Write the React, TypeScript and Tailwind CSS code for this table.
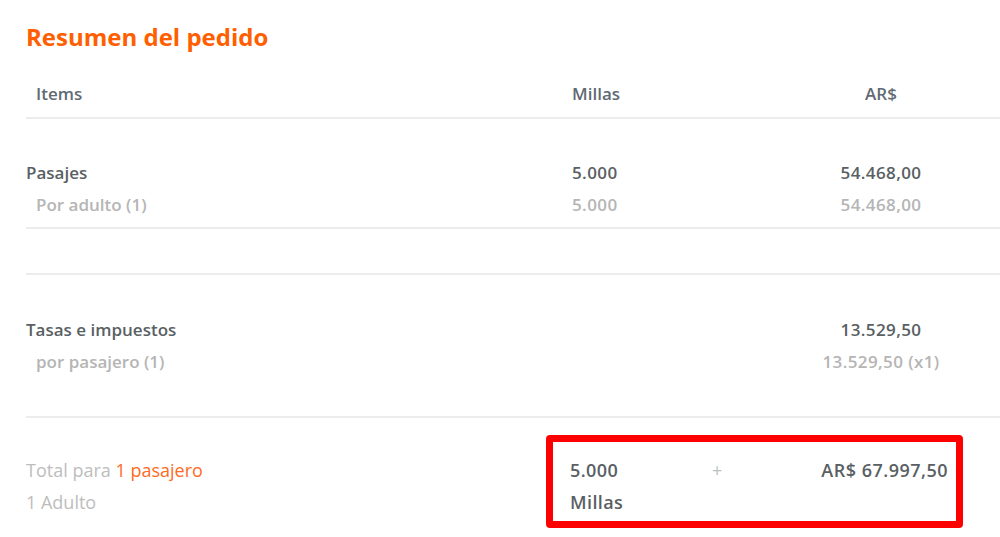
const rows = [
  {
    label: "Pasajes",
    sub: "Por adulto (1)",
    millas: "5.000",
    millasSub: "5.000",
    price: "54.468,00",
    priceSub: "54.468,00",
  },
];

const Line = () => <div className="h-[2px] w-full bg-[#ececec]" />;

export default function App() {
  return (
    <div className="min-h-[537px] w-[1000px] overflow-hidden bg-white pl-[26px] font-['Open_Sans',sans-serif] text-[17px]">
      <h1 className="pt-[21px] text-[24px] font-bold leading-[32px] text-[#ff5f00]">
        Resumen del pedido
      </h1>

      {/* header */}
      <div className="grid h-[64px] grid-cols-[546px_190px_238px] items-end pb-[11px] font-semibold leading-[24px] text-[#5f6a74]">
        <span className="pl-[10px]">Items</span>
        <span>Millas</span>
        <span className="text-center">AR$</span>
      </div>
      <Line />

      {rows.map((r) => (
        <div key={r.label}>
          <div className="grid grid-cols-[546px_190px_238px] pt-[38px] pb-[6px] font-semibold leading-[32px]">
            <div>
              <div className="text-[#5a5f64]">{r.label}</div>
              <div className="pl-[10px] text-[#b5b5b5]">{r.sub}</div>
            </div>
            <div className="tracking-[0.4px]">
              <div className="text-[#5a5f64]">{r.millas}</div>
              <div className="text-[#b5b5b5]">{r.millasSub}</div>
            </div>
            <div className="text-center tracking-[0.4px]">
              <div className="text-[#5a5f64]">{r.price}</div>
              <div className="text-[#b5b5b5]">{r.priceSub}</div>
            </div>
          </div>
          <Line />
        </div>
      ))}

      <div className="h-[44px]" />
      <Line />

      <div className="grid grid-cols-[546px_190px_238px] pt-[39px] pb-[38px] font-semibold leading-[32px]">
        <div>
          <div className="text-[#5a5f64]">Tasas e impuestos</div>
          <div className="pl-[10px] text-[#b5b5b5]">por pasajero (1)</div>
        </div>
        <div />
        <div className="text-center tracking-[0.4px]">
          <div className="text-[#5a5f64]">13.529,50</div>
          <div className="text-[#b5b5b5]">13.529,50 (x1)</div>
        </div>
      </div>
      <Line />

      {/* total */}
      <div className="flex pt-[17px] text-[18px] leading-[32px]">
        <div className="w-[520px] pt-[19px] text-[#bdbdbd]">
          <div>
            Total para <span className="text-[#ff6a1f]">1 pasajero</span>
          </div>
          <div>1 Adulto</div>
        </div>
        <div className="flex h-[93px] w-[417px] rounded-[4px] border-[7px] border-[#ff0000] pt-[12px] pr-[8px] pl-[17px] font-semibold text-[#5a5f64]">
          <div className="w-[142px] tracking-[0.4px]">
            <div>5.000</div>
            <div>Millas</div>
          </div>
          <div className="w-[30px] font-normal text-[#b9c4bc]">+</div>
          <div className="flex-1 text-right tracking-[0.5px]">AR$ 67.997,50</div>
        </div>
      </div>
    </div>
  );
}
